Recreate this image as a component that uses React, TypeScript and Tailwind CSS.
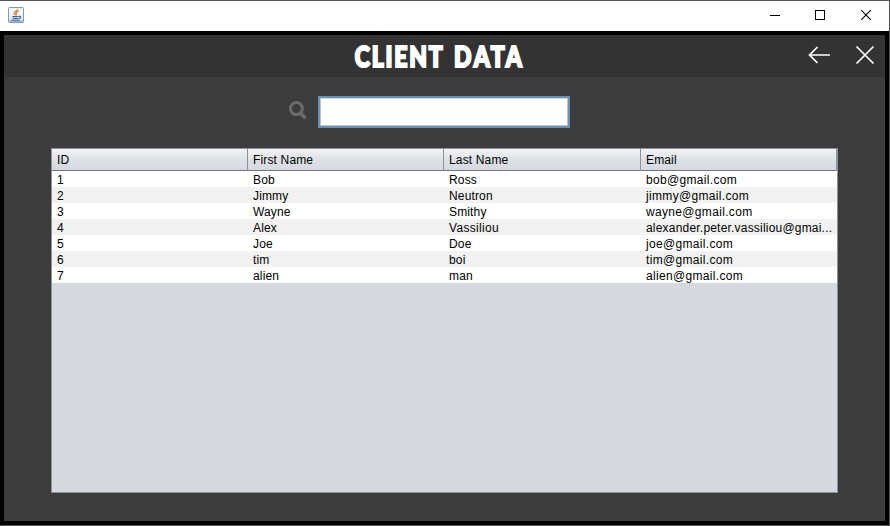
const clients = [
  ["1", "Bob", "Ross", "bob@gmail.com"],
  ["2", "Jimmy", "Neutron", "jimmy@gmail.com"],
  ["3", "Wayne", "Smithy", "wayne@gmail.com"],
  ["4", "Alex", "Vassiliou", "alexander.peter.vassiliou@gmai..."],
  ["5", "Joe", "Doe", "joe@gmail.com"],
  ["6", "tim", "boi", "tim@gmail.com"],
  ["7", "alien", "man", "alien@gmail.com"],
];
const columns = ["ID", "First Name", "Last Name", "Email"];
const grid = "grid grid-cols-[196px_196px_197px_196px]";

function tracking(value: string) {
  if (value.length > 20) return "tracking-[0.2px]";
  return value.includes("@") || value === "Vassiliou" ? "tracking-[0.33px]" : "tracking-[0.15px]";
}

function JavaIcon() {
  return (
    <svg width="16" height="16" viewBox="0 0 16 16" fill="none">
      <defs>
        <linearGradient id="tile" x1="0" y1="0" x2="0" y2="1">
          <stop offset="0" stopColor="#e9f0f5" />
          <stop offset="0.3" stopColor="#f8fafb" />
          <stop offset="0.75" stopColor="#e3eaf0" />
          <stop offset="1" stopColor="#8facc7" />
        </linearGradient>
      </defs>
      <rect x="0.5" y="0.5" width="15" height="15" rx="1" fill="url(#tile)" stroke="#8199b2" />
      <path d="M9.4 2.2C9.4 4 5.8 4.6 6.2 6.4c.1.8.9 1.2 1 1.8M10.8 4.2C8.4 5 7.6 5.6 8.2 6.6c.5.8.2 1.3-.2 1.7" stroke="#df7c38" strokeWidth="1.3" />
      <path d="M4.2 9.5h6.6M4.8 11.4h5.4M3.4 13.3h8.4M11 9.5c2.4-.6 2.2 1.6-.2 2" stroke="#406a94" strokeWidth="1.1" />
    </svg>
  );
}

function TitleBar() {
  return (
    <div className="flex h-[30px] items-start justify-between bg-white">
      <div className="pl-2 pt-[6px]"><JavaIcon /></div>
      <svg width="137" height="30" viewBox="752 1 137 30" fill="none" stroke="#000">
        <path d="M770 15.5h10" shapeRendering="crispEdges" />
        <path d="M815.5 10.5h9v9h-9z" shapeRendering="crispEdges" />
        <path d="M861.2 10.2l9.6 9.6M870.8 10.2l-9.6 9.6" strokeWidth="1.1" />
      </svg>
    </div>
  );
}

function Header() {
  return (
    <div className="grid h-[42px] grid-cols-[350px_174px_1fr] bg-[#333333]">
      <div />
      <h1 className="origin-left scale-x-[0.79] whitespace-nowrap pl-px font-[Lato,sans-serif] text-[29px] font-black leading-[41px] tracking-[2.3px] text-white [-webkit-text-stroke:2.2px_white]">CLIENT <span className="pl-1 tracking-[3.4px]">DATA</span></h1>
      <svg className="justify-self-end" width="85" height="42" viewBox="800 35 85 42" fill="none" stroke="#fff" strokeWidth="1.7">
        <path d="M830 55h-20.5M817.5 47l-8 8 8 8" />
        <path d="M856.5 46.5l17 17M873.5 46.5l-17 17" />
      </svg>
    </div>
  );
}

function Search() {
  return (
    <div className="flex pl-[284px] pt-[19px]">
      <svg className="mt-1" width="21" height="21" viewBox="288 100 21 21" fill="none" stroke="#6c6c6c">
        <circle cx="296.4" cy="108.6" r="6" strokeWidth="3" />
        <path d="M300.6 113l4.8 5.2" strokeWidth="3.6" />
      </svg>
      <div className="ml-[9px] flex h-8 w-[252px] border-2 border-[#6c8fb2] bg-white">
        <input aria-label="Search clients" className="w-full border border-[#bdc4d0] border-t-[#d3d5dc] bg-white px-1 font-['Liberation_Sans',sans-serif] text-xs outline-none" />
      </div>
    </div>
  );
}

function ClientTable() {
  return (
    <div className="ml-[47px] mt-5 h-[345px] w-[787px] border border-[#8d9199] bg-[#d6d9e0] font-['Liberation_Sans',Arial,sans-serif] text-xs text-black">
      <div className={`${grid} h-[22px] border-b border-[#71757e] bg-linear-to-b from-[#f3f4f6] via-[#dfe1e7] via-50% to-[#d6d9e0]`}>
        {columns.map((name) => (
          <div key={name} className="border-r border-[#8e929b] pl-[5px] leading-[22px] tracking-[0.15px]">{name}</div>
        ))}
      </div>
      {clients.map((row) => (
        <div key={row[0]} className={`${grid} h-4 even:bg-white odd:bg-[#f2f2f2]`}>
          {row.map((value, i) => (
            <div key={i} className={`whitespace-nowrap pl-[5px] leading-[18px] ${tracking(value)}`}>{value}</div>
          ))}
        </div>
      ))}
    </div>
  );
}

export default function App() {
  return (
    <div className="h-[526px] w-[890px] border-b border-r border-t border-[#555555] bg-white">
      <TitleBar />
      <div className="h-[494px] border-4 border-black bg-[#3c3c3c]">
        <Header />
        <Search />
        <ClientTable />
      </div>
    </div>
  );
}
